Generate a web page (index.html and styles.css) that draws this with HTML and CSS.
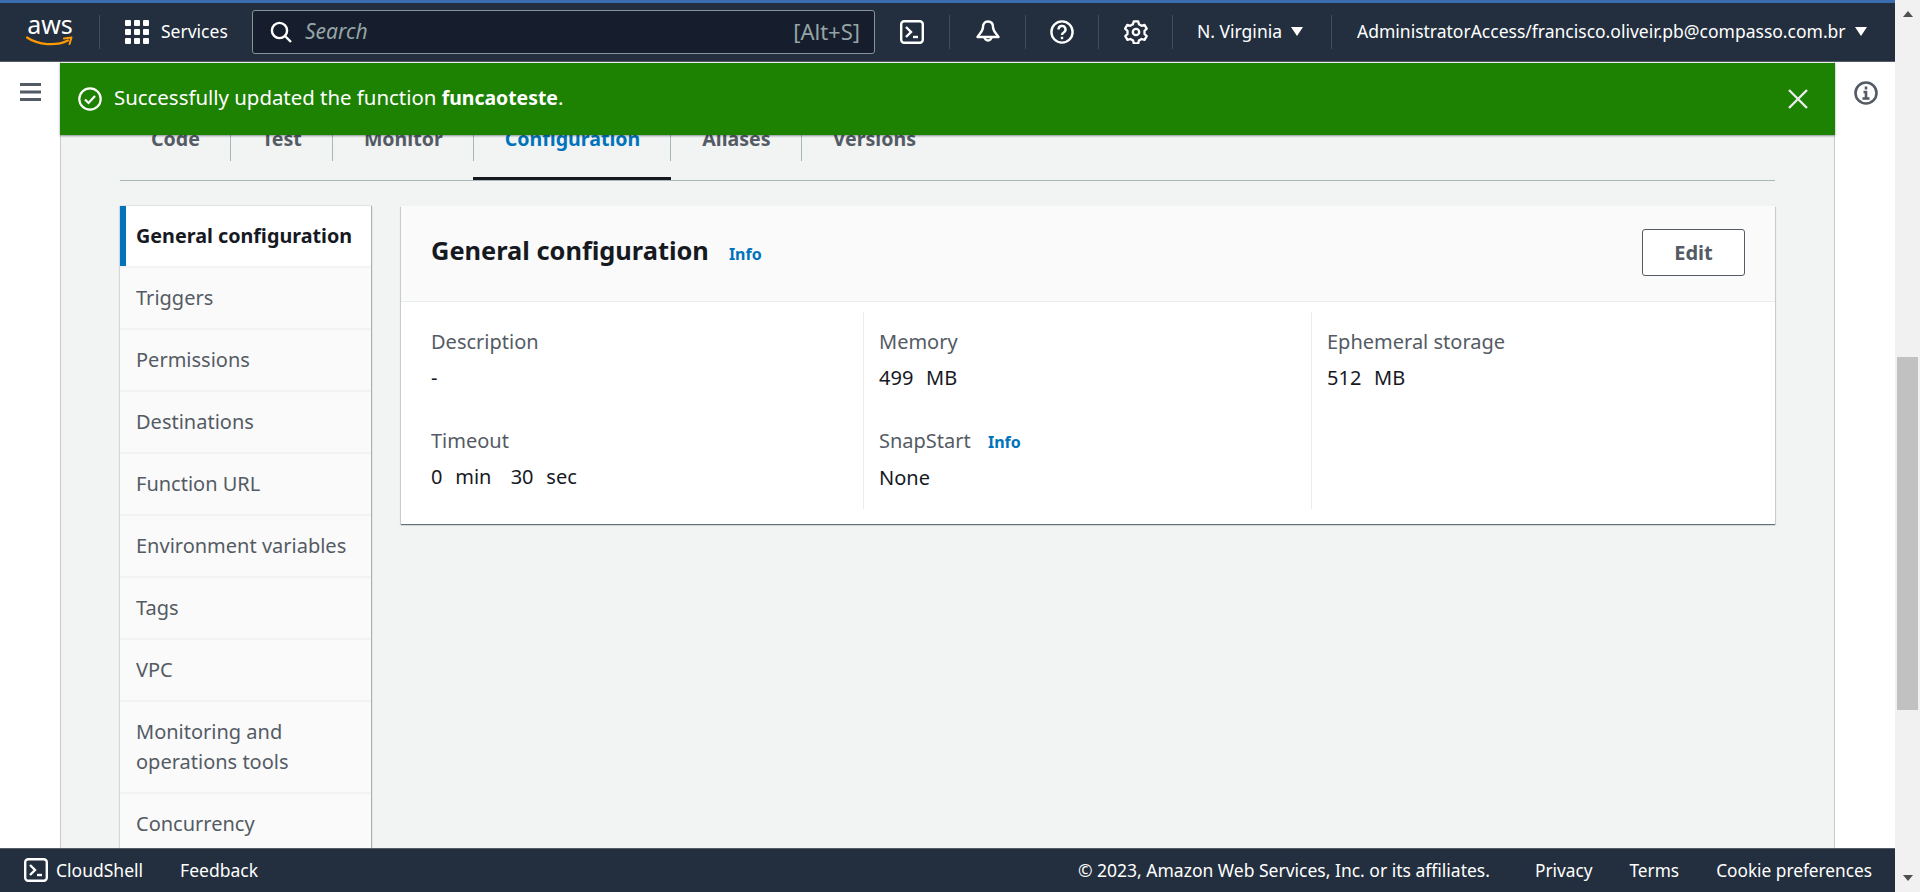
FILE: index.html
```html
<!DOCTYPE html>
<html lang="en">
  <head>
    <meta charset="UTF-8" />
    <meta name="viewport" content="width=device-width, initial-scale=1.0" />
    <title>Lambda - General configuration</title>
    <link rel="stylesheet" href="styles.css">
  </head>
  <body>
    <div class="page">
      <!-- Top navigation -->
      <header class="topbar">
        <a class="logo">
          <span class="logo-text">aws</span>
          <svg class="logo-smile" width="48" height="12" viewBox="0 0 48 12">
            <path d="M1 1.500C12 9 30 10.500 42 4.500" fill="none" stroke="#f90" stroke-width="2.200" stroke-linecap="round" />
            <path d="M38 2.500L45.500 1.500L43.500 8" fill="none" stroke="#f90" stroke-width="2" stroke-linejoin="round" stroke-linecap="round" />
          </svg>
        </a>
        <span class="nav-sep sep-logo"></span>
        <a class="services">
          <svg width="24" height="24" viewBox="0 0 24 24" fill="#fff">
            <rect x="0" y="0" width="6" height="6" rx="1" /><rect x="9" y="0" width="6" height="6" rx="1" /><rect x="18" y="0" width="6" height="6" rx="1" />
            <rect x="0" y="9" width="6" height="6" rx="1" /><rect x="9" y="9" width="6" height="6" rx="1" /><rect x="18" y="9" width="6" height="6" rx="1" />
            <rect x="0" y="18" width="6" height="6" rx="1" /><rect x="9" y="18" width="6" height="6" rx="1" /><rect x="18" y="18" width="6" height="6" rx="1" />
          </svg>
          <span class="services-text">Services</span>
        </a>
        <div class="search">
          <svg width="22" height="22" viewBox="0 0 22 22" fill="none" stroke="#fff" stroke-width="2.400">
            <circle cx="9.500" cy="9.500" r="7.600" /><path d="M15 15l6 6" />
          </svg>
          <span class="search-text">Search</span>
          <span class="search-key">[Alt+S]</span>
        </div>
        <div class="nav-icon icon-shell">
          <svg width="24" height="24" viewBox="0 0 24 24" fill="none" stroke="#fff" stroke-width="2.400">
            <rect x="1.200" y="1.200" width="21.600" height="21.600" rx="3" /><path d="M6 7l5 5-5 5" /><path d="M13 17h5" />
          </svg>
        </div>
        <span class="nav-sep"></span>
        <div class="nav-icon icon-bell">
          <svg width="24" height="24" viewBox="0 0 24 24" fill="none" stroke="#fff" stroke-width="2.400" stroke-linejoin="round">
            <path d="M12 1.500c-3.500 0-5 2.600-5 5.500 0 4-3 6-5.500 10h21c-2.500-4-5.500-6-5.500-10 0-2.900-1.500-5.500-5-5.500z" /><path d="M8.500 17a3.500 3.500 0 0 0 7 0" />
          </svg>
        </div>
        <span class="nav-sep"></span>
        <div class="nav-icon icon-help">
          <svg width="24" height="24" viewBox="0 0 24 24" fill="none" stroke="#fff" stroke-width="2.400">
            <circle cx="12" cy="12" r="10.600" /><path d="M8.500 9.500a3.500 3.500 0 1 1 5.200 3c-1.200.7-1.700 1.300-1.700 2.500" /><path d="M12 16.800v2.400" />
          </svg>
        </div>
        <span class="nav-sep"></span>
        <div class="nav-icon icon-gear">
          <svg width="24" height="24" viewBox="0 0 24 24" fill="none" stroke="#fff" stroke-width="2.300" stroke-linejoin="round">
            <path d="M9.800 1.300h4.400l.7 3 2.700 1.500 2.900-.9 2.200 3.800-2.200 2.100v3.200l2.200 2.100-2.200 3.800-2.900-.9-2.700 1.500-.7 3H9.800l-.7-3-2.700-1.500-2.900.9-2.200-3.800 2.200-2.100v-3.200L1.100 8.700l2.200-3.800 2.900.9 2.700-1.500z" /><circle cx="12" cy="12" r="3.200" />
          </svg>
        </div>
        <span class="nav-sep"></span>
        <a class="menu menu-region">N. Virginia <span class="caret"></span></a>
        <span class="nav-sep"></span>
        <a class="menu menu-user">AdministratorAccess/francisco.oliveir.pb@compasso.com.br <span class="caret"></span></a>
      </header>

      <div class="middle">
        <aside class="rail rail-left">
          <svg width="21" height="18" viewBox="0 0 21 18" fill="#545b64">
            <rect width="21" height="3" /><rect y="7.500" width="21" height="3" /><rect y="15" width="21" height="3" />
          </svg>
        </aside>

        <main class="content">
          <!-- Flash message sits over the tabs -->
          <div class="flash">
            <svg width="24" height="24" viewBox="0 0 24 24" fill="none" stroke="#fff" stroke-width="2.200">
              <circle cx="12" cy="12" r="10.700" /><path d="M7 12.500l3.500 3.500 6.500-7" />
            </svg>
            <span class="flash-text">Successfully updated the function <strong>funcaoteste</strong>.</span>
            <svg class="flash-close" width="20" height="20" viewBox="0 0 20 20" fill="none" stroke="#eaeded" stroke-width="2.400">
              <path d="M1 1l18 18M19 1L1 19" />
            </svg>
          </div>

          <nav class="tabs">
            <a class="tab">Code</a>
            <a class="tab">Test</a>
            <a class="tab">Monitor</a>
            <a class="tab active">Configuration</a>
            <a class="tab">Aliases</a>
            <a class="tab last">Versions</a>
          </nav>

          <div class="config">
            <ul class="side-nav">
              <li class="current">General configuration</li>
              <li>Triggers</li>
              <li>Permissions</li>
              <li>Destinations</li>
              <li>Function URL</li>
              <li>Environment variables</li>
              <li>Tags</li>
              <li>VPC</li>
              <li>Monitoring and operations tools</li>
              <li>Concurrency</li>
            </ul>

            <section class="card">
              <div class="card-head">
                <h2>General configuration</h2>
                <a class="info head-info">Info</a>
                <button class="btn" type="button">Edit</button>
              </div>
              <div class="card-body">
                <div class="col">
                  <div class="field">
                    <div class="label">Description</div>
                    <div class="value">-</div>
                  </div>
                  <div class="field">
                    <div class="label">Timeout</div>
                    <div class="value">0&nbsp; min &nbsp; 30&nbsp; sec</div>
                  </div>
                </div>
                <div class="col">
                  <div class="field">
                    <div class="label">Memory</div>
                    <div class="value">499&nbsp; MB</div>
                  </div>
                  <div class="field">
                    <div class="label">SnapStart <a class="info">Info</a></div>
                    <div class="value">None</div>
                  </div>
                </div>
                <div class="col">
                  <div class="field">
                    <div class="label">Ephemeral storage</div>
                    <div class="value">512&nbsp; MB</div>
                  </div>
                </div>
              </div>
            </section>
          </div>
        </main>

        <aside class="rail rail-right">
          <svg width="24" height="24" viewBox="0 0 24 24" fill="none" stroke="#545b64" stroke-width="2.600">
            <circle cx="12" cy="12" r="10.500" /><path d="M12 5.500v3" /><path d="M9.500 11h2.500v6" /><path d="M8.500 17.500h7" />
          </svg>
        </aside>
      </div>

      <footer class="footer">
        <a class="foot-shell">
          <svg width="24" height="24" viewBox="0 0 24 24" fill="none" stroke="#fff" stroke-width="2.400">
            <rect x="1.200" y="1.200" width="21.600" height="21.600" rx="3" /><path d="M6 7l5 5-5 5" /><path d="M13 17h5" />
          </svg>
          CloudShell
        </a>
        <a class="foot-feedback">Feedback</a>
        <span class="foot-copy">© 2023, Amazon Web Services, Inc. or its affiliates.</span>
        <a class="foot-link">Privacy</a>
        <a class="foot-link">Terms</a>
        <a class="foot-link">Cookie preferences</a>
      </footer>
    </div>

    <!-- Window scrollbar -->
    <div class="scrollbar">
      <span class="arrow-up"></span>
      <div class="track"><div class="thumb"></div></div>
      <span class="arrow-down"></span>
    </div>
  </body>
</html>
```

FILE: styles.css
```css
* {
  box-sizing: border-box;
}
html,
body {
  height: 100%;
}
body {
  margin: 0;
  display: flex;
  overflow: hidden;
  font-family: "Noto Sans", Arial, sans-serif;
  font-size: 20px;
  color: #16191f;
  background-color: #fff;
}
.page {
  flex: 1;
  min-width: 0;
  display: flex;
  flex-direction: column;
}

/* top nav */
.topbar {
  height: 62px;
  flex: none;
  display: flex;
  align-items: center;
  padding-bottom: 1px;
  background-color: #232f3e;
  border-top: 3px solid #3a6db0;
  border-bottom: 1px solid #545b64;
  color: #fff;
  font-size: 17.5px;
}
.logo {
  width: 46px;
  height: 40px;
  margin-left: 27px;
  position: relative;
  flex: none;
}
.logo-text {
  display: block;
  font-size: 25px;
  line-height: 24px;
  text-align: center;
}
.logo-smile {
  position: absolute;
  left: -1px;
  top: 24px;
}
.nav-sep {
  width: 1px;
  height: 34px;
  flex: none;
  background-color: #414d5c;
}
.sep-logo {
  margin-left: 26px;
}
.services {
  display: flex;
  align-items: center;
  gap: 12px;
  margin-left: 25px;
  width: 127px;
  flex: none;
}
.services-text {
  margin-top: -2px;
}
.search {
  width: 623px;
  height: 44px;
  flex: none;
  display: flex;
  align-items: center;
  padding: 0 14px 0 17px;
  background-color: #161e2d;
  border: 1px solid #879596;
  border-radius: 3px;
  font-size: 21px;
  color: #95a5a6;
}
.search-text {
  margin: -2px 0 0 13px;
  font-style: italic;
}
.search-key {
  margin: -2px 0 0 auto;
  font-size: 22px;
}
.nav-icon {
  height: 24px;
  flex: none;
  display: flex;
  justify-content: center;
}
.icon-shell {
  width: 74px;
}
.icon-bell {
  width: 75px;
}
.icon-help {
  width: 72px;
}
.icon-gear {
  width: 73px;
}
.menu {
  display: flex;
  align-items: center;
  white-space: nowrap;
  flex: none;
  padding-bottom: 1px;
}
.menu-region {
  margin-left: 24px;
  width: 134px;
}
.menu-user {
  margin-left: 25px;
}
.caret {
  width: 0;
  height: 0;
  margin-left: 9px;
  border-left: 6px solid transparent;
  border-right: 6px solid transparent;
  border-top: 9px solid #fff;
}

/* main area */
.middle {
  flex: 1;
  min-height: 0;
  display: flex;
  overflow: hidden;
}
.rail {
  flex: none;
  display: flex;
  justify-content: center;
  background-color: #fff;
}
.rail-left {
  width: 61px;
  padding: 21px 0 0 1px;
  border-right: 1px solid #c6cccc;
}
.rail-right {
  width: 61px;
  padding-top: 19px;
  padding-left: 1px;
  border-left: 1px solid #c6cccc;
}
.content {
  flex: 1;
  min-width: 0;
  padding: 59px 59px 0 59px;
  position: relative;
  background-color: #f2f3f3;
}
.flash {
  position: absolute;
  left: -1px;
  right: -1px;
  top: 1px;
  height: 72px;
  z-index: 2;
  display: flex;
  align-items: center;
  padding: 0 27px 0 18px;
  background-color: #1d8102;
  box-shadow: 0 1px 2px rgba(0, 28, 36, 0.45);
  color: #fff;
}
.flash-text {
  margin: -4px 0 0 12px;
  font-size: 20.4px;
}
.flash-text strong {
  font-size: 19.4px;
}
.flash-close {
  margin-left: auto;
}

/* tabs */
.tabs {
  display: flex;
  height: 60px;
  border-bottom: 1px solid #aab7b8;
}
.tab {
  position: relative;
  height: 40px;
  padding: 3px 30px 0 31px;
  line-height: 30px;
  font-size: 19.6px;
  font-weight: 700;
  color: #545b64;
  border-right: 1px solid #aab7b8;
}
.tab.active {
  color: #0073bb;
}
.tab.active::after {
  content: "";
  position: absolute;
  left: -1px;
  right: -1px;
  top: 56px;
  height: 3px;
  background-color: #16191f;
}
.tab.last {
  border-right: 0;
}

/* config section */
.config {
  display: flex;
  align-items: flex-start;
  gap: 30px;
  margin-top: 25px;
}
.side-nav {
  width: 251px;
  flex: none;
  margin: 0;
  padding: 0;
  list-style: none;
  box-shadow: 1px 0 1px rgba(0, 28, 36, 0.3), -1px 0 1px rgba(0, 28, 36, 0.12);
}
.side-nav li {
  min-height: 60px;
  padding: 15px 14px 15px 16px;
  margin-bottom: 2px;
  line-height: 30px;
  color: #545b64;
  background-color: #fafafa;
}
.side-nav li.current {
  font-size: 19.75px;
  font-weight: 700;
  color: #16191f;
  background-color: #fff;
  border-left: 6px solid #0073bb;
  padding-left: 10px;
}
.card {
  flex: 1;
  min-width: 0;
  background-color: #fff;
  box-shadow: 0 1px 1px rgba(0, 28, 36, 0.5), 1px 1px 1px rgba(0, 28, 36, 0.1), -1px 1px 1px rgba(0, 28, 36, 0.1);
}
.card-head {
  height: 96px;
  display: flex;
  align-items: center;
  padding: 0 30px 4px;
  background-color: #fafafa;
  border-bottom: 1px solid #eaeded;
}
.card-head h2 {
  margin: 0 0 4px;
  font-size: 25.4px;
  font-weight: 700;
  color: #16191f;
}
.info {
  font-size: 16px;
  font-weight: 700;
  color: #0073bb;
}
.head-info {
  margin: 5px 0 0 20px;
}
.btn {
  margin: 2px 0 0 auto;
  width: 103px;
  height: 47px;
  padding: 0;
  background-color: #fff;
  border: 1px solid #545b64;
  border-radius: 3px;
  font-family: inherit;
  font-size: 20px;
  font-weight: 700;
  color: #545b64;
  cursor: pointer;
}
.card-body {
  display: flex;
  padding: 10px 0 15px;
}
.col {
  width: 448px;
  height: 197px;
  padding: 0 15px;
  border-left: 1px solid #eaeded;
}
.col:first-child {
  width: 462px;
  padding-left: 30px;
  border-left: 0;
}
.field {
  height: 99px;
  padding-top: 15px;
}
.label {
  line-height: 30px;
  color: #545b64;
}
.label .info {
  margin-left: 12px;
}
.value {
  margin-top: 6px;
  line-height: 30px;
  word-spacing: 1.2px;
  color: #16191f;
}

/* footer */
.footer {
  height: 44px;
  flex: none;
  display: flex;
  align-items: center;
  padding: 0 23px 1px 24px;
  background-color: #232f3e;
  border-top: 1px solid #545b64;
  color: #fff;
  font-size: 17.5px;
}
.foot-shell {
  display: flex;
  align-items: center;
  gap: 8px;
}
.foot-feedback {
  margin-left: 37px;
}
.foot-copy {
  margin-left: auto;
  margin-right: 45px;
}
.foot-link {
  margin-left: 37px;
  font-size: 17.25px;
}
.foot-copy + .foot-link {
  margin-left: 0;
}

/* scrollbar */
.scrollbar {
  width: 25px;
  flex: none;
  display: flex;
  flex-direction: column;
  align-items: center;
  background-color: #f1f1f1;
}
.arrow-up,
.arrow-down {
  width: 0;
  height: 0;
  flex: none;
  border-left: 5.5px solid transparent;
  border-right: 5.5px solid transparent;
}
.arrow-up {
  margin: 11px 0 7px;
  border-bottom: 6px solid #505050;
}
.arrow-down {
  margin: 7px 0 11px;
  border-top: 6px solid #505050;
}
.track {
  flex: 1;
  width: 100%;
  display: flex;
  justify-content: center;
  padding-top: 333px;
}
.thumb {
  width: 21px;
  height: 353px;
  background-color: #c1c1c1;
}
```
